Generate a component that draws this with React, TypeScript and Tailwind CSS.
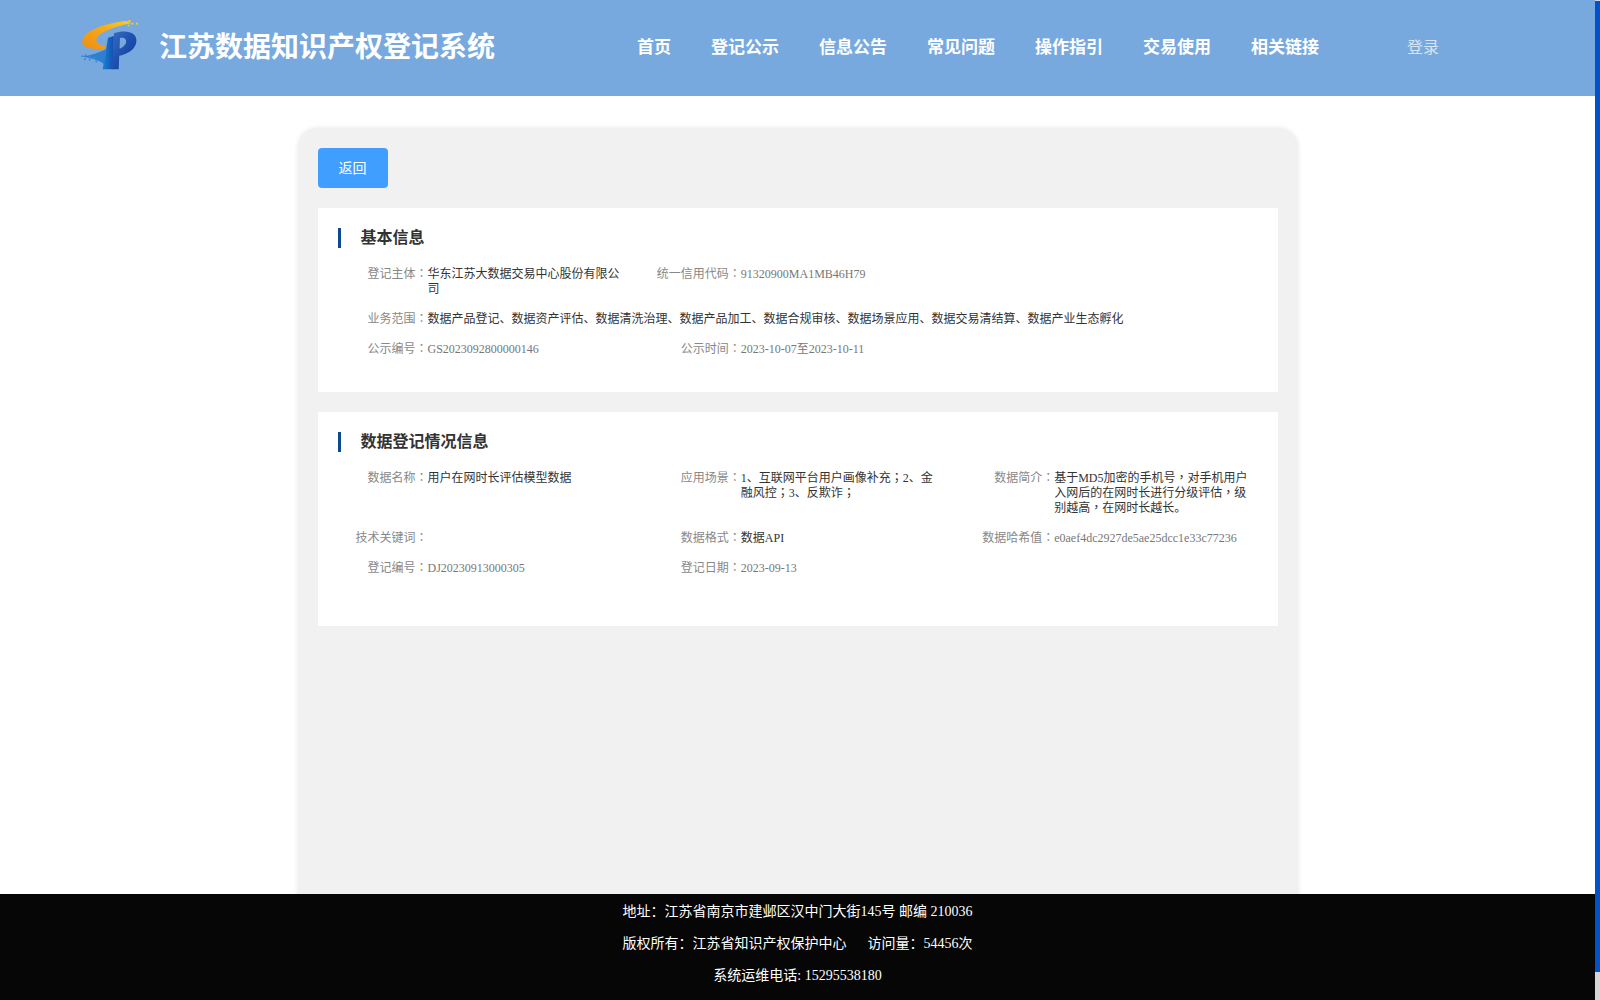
import type { ReactNode } from 'react';

const font = { fontFamily: '"Liberation Serif", "Noto Sans CJK SC", serif' };

const navItems = ['登记公示', '信息公告', '常见问题', '操作指引', '交易使用', '相关链接'];

function Logo() {
  return (
    <svg width="70" height="64" viewBox="0 0 210 192" className="shrink-0 mb-1">
      <defs>
        <linearGradient id="swoosh" x1="0" y1="1" x2="1" y2="0">
          <stop offset="0" stopColor="#f08c12" />
          <stop offset="0.6" stopColor="#f5ab1c" />
          <stop offset="1" stopColor="#f8cf22" />
        </linearGradient>
        <linearGradient id="pblue" x1="0" y1="0" x2="1" y2="1">
          <stop offset="0" stopColor="#3a6cc4" />
          <stop offset="0.5" stopColor="#1c4fae" />
          <stop offset="1" stopColor="#0a3c98" />
        </linearGradient>
        <linearGradient id="stem" x1="0" y1="0" x2="1" y2="0">
          <stop offset="0" stopColor="#1f7fd6" />
          <stop offset="1" stopColor="#0f4fb0" />
        </linearGradient>
      </defs>
      <path d="M152 21C100 26 40 42 22 72C14 86 20 98 40 103L84 108L88 96C70 94 58 86 62 74C70 56 110 38 166 28Z" fill="url(#swoosh)" />
      <path d="M96 71L114 66L110 166H80Z" fill="url(#stem)" />
      <path d="M14 128C40 125 70 116 92 104L84 150C70 138 40 130 14 128Z" fill="#2f7fd0" />
      <path d="M114 58C135 50 160 50 172 60C186 72 184 92 168 108C156 118 140 125 122 126L124 105C136 104 146 96 150 86C152 76 146 70 132 72L128 166H108Z" fill="url(#pblue)" />
      <g fill="#f6c81e">
        <rect x="148" y="24" width="7" height="6" />
        <rect x="157" y="18" width="7" height="6" />
        <rect x="166" y="26" width="6" height="6" />
        <rect x="155" y="32" width="6" height="5" />
        <rect x="180" y="26" width="6" height="6" />
      </g>
      <g fill="#3f88d8">
        <rect x="16" y="124" width="6" height="5" />
        <rect x="26" y="121" width="6" height="5" />
        <rect x="38" y="124" width="7" height="6" />
        <rect x="24" y="133" width="6" height="5" />
        <rect x="38" y="134" width="6" height="5" />
        <rect x="50" y="129" width="7" height="6" />
        <rect x="58" y="140" width="6" height="5" />
      </g>
    </svg>
  );
}

// these marks sit centred in the cell in the picture, the SC face puts them low-left
function P({ children }: { children: string }) {
  return <span className="font-['Noto_Sans_CJK_TC'] leading-[0]">{children}</span>;
}

function Field({ label, value, dark, wide }: { label: string; value?: ReactNode; dark?: boolean; wide?: boolean }) {
  return (
    <div className="flex min-w-0">
      <div className="w-[90px] shrink-0 flex justify-end whitespace-nowrap text-[#888]">
        <span>
          {label}
          <P>：</P>
        </span>
      </div>
      <div className={`${wide ? 'whitespace-nowrap' : 'w-[200px]'} ${dark ? 'text-[#333]' : 'text-[#777]'}`}>{value}</div>
    </div>
  );
}

function SectionTitle({ children }: { children: string }) {
  return (
    <div className="flex items-center h-5 mb-[19px]">
      <div className="w-[3px] h-5 bg-[#0d4a91]" />
      <div className="ml-[20px] text-base font-bold text-[#333]">{children}</div>
    </div>
  );
}

export default function App() {
  return (
    <div className="flex h-screen overflow-hidden bg-white" style={font}>
      <div className="flex-1 min-w-0 flex flex-col">
        <header className="h-24 shrink-0 bg-[#78a9de] flex items-center pl-[76px]">
          <Logo />
          <div className="ml-[13px] text-[28px] font-bold text-white leading-none whitespace-nowrap">江苏数据知识产权登记系统</div>
          <nav className="ml-[142px] flex items-center gap-10 text-[17px] font-bold text-white whitespace-nowrap">
            <span>首页</span>
            {navItems.map((item) => (
              <span key={item}>{item}</span>
            ))}
          </nav>
          <div className="ml-[88px] text-base text-white/70">登录</div>
        </header>

        <main className="flex-1 min-h-0 overflow-hidden pt-8">
          <div className="mx-auto w-[1000px] h-[900px] rounded-[20px] bg-[#f1f1f1] shadow-[0_0_5px_rgba(0,0,0,0.1)] p-5">
            <button className="block w-[70px] h-10 pt-0.5 rounded-[4px] bg-[#409eff] text-white text-sm">返回</button>

            <section className="mt-5 h-[184px] bg-white pl-5 pt-5 text-xs leading-[15px]">
              <SectionTitle>基本信息</SectionTitle>
              <div className="grid grid-cols-3">
                <Field label="登记主体" value="华东江苏大数据交易中心股份有限公司" dark />
                <Field label="统一信用代码" value="91320900MA1MB46H79" />
              </div>
              <div className="mt-[15px]">
                <Field label="业务范围" value="数据产品登记、数据资产评估、数据清洗治理、数据产品加工、数据合规审核、数据场景应用、数据交易清结算、数据产业生态孵化" dark wide />
              </div>
              <div className="mt-[15px] grid grid-cols-3">
                <Field label="公示编号" value="GS2023092800000146" />
                <Field label="公示时间" value="2023-10-07至2023-10-11" />
              </div>
            </section>

            <section className="mt-5 h-[214px] bg-white pl-5 pt-5 text-xs leading-[15px]">
              <SectionTitle>数据登记情况信息</SectionTitle>
              <div className="grid grid-cols-3">
                <Field label="数据名称" value="用户在网时长评估模型数据" dark />
                <Field
                  label="应用场景"
                  dark
                  value={
                    <>
                      1、互联网平台用户画像补充<P>；</P>2、金融风控<P>；</P>3、反欺诈<P>；</P>
                    </>
                  }
                />
                <Field
                  label="数据简介"
                  dark
                  value={
                    <>
                      基于MD5加密的手机号<P>，</P>对手机用户入网后的在网时长进行分级评估<P>，</P>级别越高<P>，</P>在网时长越长。
                    </>
                  }
                />
              </div>
              <div className="mt-[15px] grid grid-cols-3">
                <Field label="技术关键词" />
                <Field label="数据格式" value="数据API" dark />
                <Field label="数据哈希值" value="e0aef4dc2927de5ae25dcc1e33c77236" />
              </div>
              <div className="mt-[15px] grid grid-cols-3">
                <Field label="登记编号" value="DJ20230913000305" />
                <Field label="登记日期" value="2023-09-13" />
              </div>
            </section>
          </div>
        </main>

        <footer className="h-[106px] shrink-0 bg-[#060606] pt-0.5 text-white text-sm leading-8 text-center whitespace-nowrap">
          <div>地址：江苏省南京市建邺区汉中门大街145号 邮编 210036</div>
          <div>版权所有：江苏省知识产权保护中心&nbsp;&nbsp;&nbsp;&nbsp;&nbsp;&nbsp;访问量：54456次</div>
          <div>系统运维电话: 15295538180</div>
        </footer>
      </div>
      <div className="w-[5px] shrink-0 bg-[#d6d6d6] pt-px">
        <div className="h-[971px] bg-[#0052cc]" />
      </div>
    </div>
  );
}
